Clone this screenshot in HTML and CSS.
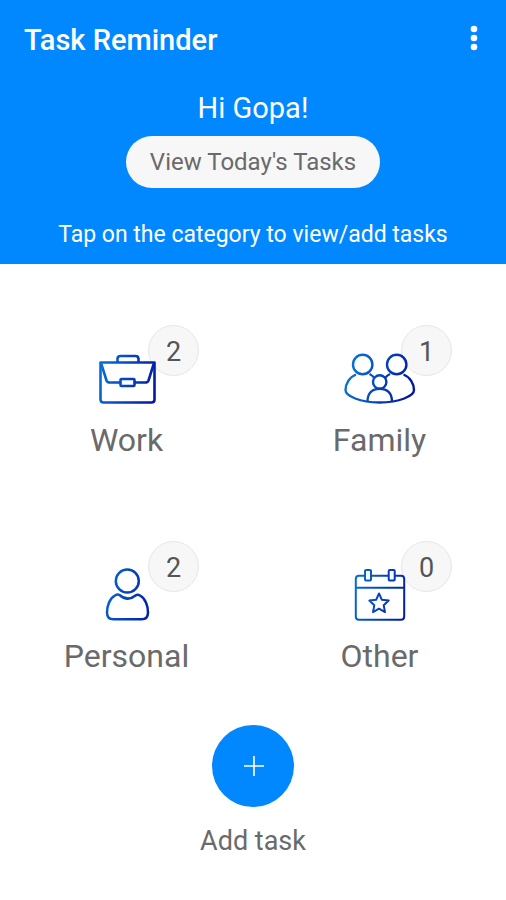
FILE: index.html
```html
<!DOCTYPE html>
<html lang="en">
<head>
<meta charset="utf-8">
<meta name="viewport" content="width=device-width, initial-scale=1">
<title>Task Reminder</title>
<link rel="stylesheet" href="styles.css">
</head>
<body>
<header class="header">
  <div class="bar">
    <h1 class="title">Task Reminder</h1>
    <button class="menu" type="button" aria-label="More options">
      <svg width="8" height="26" viewBox="0 0 8 26" fill="#fff"><circle cx="4" cy="4" r="3.3"/><circle cx="4" cy="13" r="3.3"/><circle cx="4" cy="22" r="3.3"/></svg>
    </button>
  </div>
  <p class="greeting">Hi Gopa!</p>
  <button class="today" type="button">View Today's Tasks</button>
  <p class="hint">Tap on the category to view/add tasks</p>
</header>
<main class="main">
  <div class="categories">
    <button class="category" type="button">
      <span class="picture">
        <svg class="icon" viewBox="0 0 77 58" stroke-width="2.6">
          <defs>
            <linearGradient id="ink" gradientUnits="userSpaceOnUse" x1="8" y1="20" x2="70" y2="36">
              <stop offset="0" stop-color="#0873d8"/><stop offset="1" stop-color="#0316a0"/>
            </linearGradient>
          </defs>
          <path d="M12.5 12.5H66.5V49.5Q66.5 52.5 63.5 52.5H15.5Q12.5 52.5 12.5 49.5Z"/>
          <path d="M29.5 12V9Q29.5 6 32.5 6H47.5Q50.5 6 50.5 9V12"/>
          <path d="M13 13L18.5 30.5Q19.3 32.5 21.5 32.5H32M47 32.5H57.5Q59.7 32.5 60.5 30.5L66 13"/>
          <rect x="32.5" y="29" width="14" height="7" rx="1"/>
        </svg>
        <span class="badge">2</span>
      </span>
      <span class="name">Work</span>
    </button>
    <button class="category" type="button">
      <span class="picture">
        <svg class="icon" viewBox="0 0 77 58" stroke-width="2.4">
          <circle cx="21.7" cy="14.5" r="9.7"/>
          <circle cx="55.7" cy="14.5" r="9.7"/>
          <circle cx="38.7" cy="32" r="6.7"/>
          <path d="M15 24.5C8.5 27 4.500 34 4.500 40C4.5 46 19 52.500 38.7 52.500S73 46 73 40C73 34 69 27 62.500 24.500"/>
          <path d="M28.5 24Q31.5 25.500 33.500 28M49 24Q46 25.500 44 28"/>
          <path d="M26.500 51.500C26.500 43 31.500 38.700 38.700 38.700S51 43 51 51.500"/>
        </svg>
        <span class="badge">1</span>
      </span>
      <span class="name">Family</span>
    </button>
    <button class="category" type="button">
      <span class="picture">
        <svg class="icon" viewBox="0 0 77 58" stroke-width="2.5">
          <circle cx="39.3" cy="15" r="11.500"/>
          <path d="M31.5 29Q29.5 28 27 29.5C21.5 32.5 19 40 19 46.5Q19 53.3 25.5 53.3H53.5Q60 53.3 60 46.500C60 40 57.500 32.500 52 29.500Q49.500 28 47.500 29.500Q39.500 36 31.500 29Z"/>
        </svg>
        <span class="badge">2</span>
      </span>
      <span class="name">Personal</span>
    </button>
    <button class="category" type="button">
      <span class="picture">
        <svg class="icon" viewBox="0 0 77 58" stroke-width="2">
          <path d="M24 9.7H18Q14.8 9.7 14.8 13V50.5Q14.8 53.7 18 53.7H60Q63.2 53.7 63.2 50.5V13Q63.2 9.7 60 9.7H54M30 9.7H47.5M14.8 21.7H63.2"/>
          <rect x="24" y="4" width="6" height="10.5" rx="1"/>
          <rect x="47.7" y="4" width="6" height="10.5" rx="1"/>
          <path d="M38 27.5L40.9 33.8L47.7 34.6L42.7 39.3L44 46.1L38 42.7L32 46.1L33.3 39.3L28.3 34.6L35.1 33.8Z"/>
        </svg>
        <span class="badge">0</span>
      </span>
      <span class="name">Other</span>
    </button>
  </div>
  <button class="add" type="button">
    <span class="disc">
      <svg width="22" height="22" viewBox="0 0 22 22" fill="none" stroke="#fff" stroke-width="1.6"><path d="M12 1V21M2 11H22"/></svg>
    </span>
    <span class="caption">Add task</span>
  </button>
</main>
</body>
</html>
```
FILE: styles.css
```css
* {
  box-sizing: border-box;
}

body {
  margin: 0;
  background: #fff;
  color: #6a6a6a;
  font-family: Roboto, "Liberation Sans", sans-serif;
}

button {
  margin: 0;
  padding: 0;
  border: 0;
  background: none;
  color: inherit;
  font: inherit;
  cursor: pointer;
}

h1,
p {
  margin: 0;
}

.header {
  display: flex;
  flex-direction: column;
  align-items: center;
  padding-bottom: 13px;
  background: #0288fe;
  color: #fff;
}

.bar {
  display: flex;
  align-self: stretch;
  align-items: center;
  justify-content: space-between;
  height: 80px;
  padding: 0 20px 0 24px;
}

.title {
  font-size: 29px;
  font-weight: 500;
  line-height: 36px;
}

.menu {
  display: flex;
  justify-content: center;
  width: 24px;
  padding-bottom: 4px;
}

.greeting {
  font-size: 29px;
  line-height: 36px;
  padding: 10px 0;
}

.today {
  height: 52px;
  padding: 0 24px;
  border-radius: 26px;
  background: #f7f7f7;
  color: #6a6a6a;
  font-size: 24px;
}

.hint {
  margin-top: 31px;
  font-size: 23px;
  line-height: 32px;
}

.main {
  display: flex;
  flex-direction: column;
  align-items: center;
  padding: 86px 0 40px;
}

.categories {
  display: grid;
  grid-template-columns: 1fr 1fr;
  width: 100%;
  row-gap: 107px;
}

.category {
  display: flex;
  flex-direction: column;
  align-items: center;
}

.picture {
  position: relative;
  height: 71px;
}

.icon {
  position: relative;
  z-index: 1;
  display: block;
  width: 77px;
  height: 58px;
  fill: none;
  stroke: url(#ink);
  stroke-linejoin: round;
}

.badge {
  position: absolute;
  top: -25px;
  right: -34px;
  width: 51px;
  height: 51px;
  border: 1px solid #e6e6e6;
  border-radius: 50%;
  background: #f7f7f7;
  color: #555;
  font-size: 27px;
  line-height: 52px;
}

.name {
  font-size: 32px;
  line-height: 38px;
}

.add {
  display: flex;
  flex-direction: column;
  align-items: center;
  gap: 18px;
  margin-top: 50px;
}

.disc {
  display: flex;
  align-items: center;
  justify-content: center;
  width: 82px;
  height: 82px;
  border-radius: 50%;
  background: #0288fe;
}

.caption {
  font-size: 27px;
  line-height: 32px;
}
```
